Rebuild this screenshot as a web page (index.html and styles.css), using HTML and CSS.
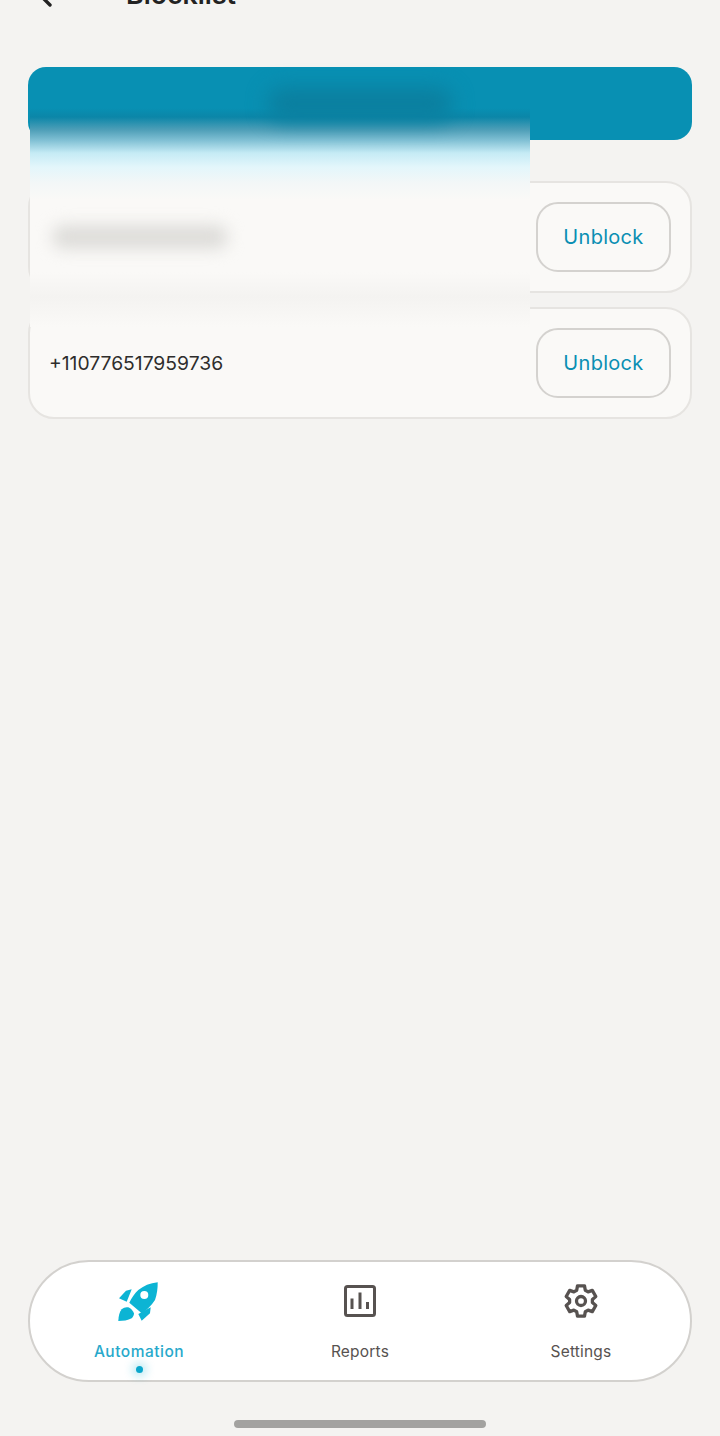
FILE: index.html
```html
<!DOCTYPE html>
<html lang="en">
<head>
    <meta charset="UTF-8">
    <meta name="viewport" content="width=device-width, initial-scale=1.0">
    <title>Blocklist</title>
    <link rel="stylesheet" href="styles.css">
</head>
<body>
    <header class="topbar">
        <svg class="back" width="24" height="28" viewBox="0 0 24 28" fill="none" stroke="#222" stroke-width="3.4" stroke-linecap="round" stroke-linejoin="round">
            <path d="M16 9 L8 17 L16 25"/>
        </svg>
        <h1 class="title">Blocklist</h1>
    </header>

    <main class="content">
        <div class="banner"><span class="banner-blur"></span></div>

        <div class="row">
            <span class="number-blur"></span>
            <button class="btn">Unblock</button>
        </div>
        <div class="row">
            <span class="number">+110776517959736</span>
            <button class="btn">Unblock</button>
        </div>

        <!-- smudge over the top of the list -->
        <div class="smudge"></div>
    </main>

    <nav class="tabs">
        <a class="tab active">
            <svg width="44" height="44" viewBox="0 0 44 44" fill="#0cb4d4">
                <path fill-rule="evenodd" d="M40.700 3.300 C33 4 26.500 7 21.300 11 C17.500 14.500 14.500 19 12.300 23.700 L24.700 34.300 C29.500 31.500 34 27 38 21 C40 15.500 40.800 9.500 40.700 3.300 Z M27.300 12 A4 4 0 1 0 27.300 20 A4 4 0 1 0 27.300 12 Z"/>
                <path d="M14.700 10.300 L9 11.700 L2 19.300 L9.700 22.700 Z"/>
                <path d="M33.700 28.300 L33 34.300 L24.700 41.700 L21.300 35 Z"/>
                <path d="M1.300 42 C1.500 37 2.500 33 4.700 30.300 C6.500 28.500 9 27.800 11.300 28.300 C14 29.500 16 31.800 17 34.300 C17 36.500 16 38 14.700 39.300 C11 41.500 6 42 1.300 42 Z"/>
            </svg>
            <span class="tab-label">Automation</span>
            <span class="dot"></span>
        </a>
        <a class="tab">
            <svg width="44" height="44" viewBox="0 0 44 44" fill="none" stroke="#575250" stroke-width="3">
                <rect x="7.500" y="7.500" width="29" height="29" rx="2"/>
                <path d="M14 19.500 V30 M22 13.500 V30 M29.500 23 V30"/>
            </svg>
            <span class="tab-label">Reports</span>
        </a>
        <a class="tab">
            <svg width="44" height="44" viewBox="0 0 44 44" fill="none" stroke="#575250" stroke-width="3.300" stroke-linejoin="round">
                <path d="M17.700 11.300 L18.500 6.900 H25.500 L26.300 11.300 L29.100 12.900 L33.300 11.400 L36.800 17.500 L33.400 20.400 V23.600 L36.800 26.500 L33.300 32.600 L29.100 31.100 L26.300 32.700 L25.500 37.100 H18.500 L17.700 32.700 L14.900 31.100 L10.700 32.600 L7.200 26.500 L10.600 23.600 V20.400 L7.200 17.500 L10.700 11.400 L14.900 12.900 Z"/>
                <circle cx="22" cy="22" r="4.500"/>
            </svg>
            <span class="tab-label">Settings</span>
        </a>
    </nav>

    <div class="home-bar"></div>
</body>
</html>
```

FILE: styles.css
```css
body {
    display: flex;
    flex-direction: column;
    height: 1436px;
    margin: 0;
    overflow: hidden;
    background-color: #f4f3f1;
    font-family: 'Inter', 'Noto Sans', sans-serif;
    color: #222;
}

.topbar {
    display: flex;
    align-items: center;
    gap: 68px;
    height: 48px;
    margin-top: -30px;
    padding-left: 34px;
    flex-shrink: 0;
}

.title {
    margin: 0;
    font-size: 26.800px;
    font-weight: 600;
}

.content {
    position: relative;
    flex: 1;
    display: flex;
    flex-direction: column;
    padding: 49px 28px 0;
}

.banner {
    display: flex;
    justify-content: center;
    height: 73px;
    margin-bottom: 41px;
    border-radius: 18px;
    background-color: #0890b3;
}

.banner-blur {
    position: relative;
    z-index: 1;
    width: 186px;
    height: 34px;
    margin-top: 20px;
    border-radius: 17px;
    background-color: #0b7f9f;
    filter: blur(10px);
}

.row {
    display: flex;
    align-items: center;
    justify-content: space-between;
    box-sizing: border-box;
    height: 112px;
    margin-bottom: 14px;
    padding: 0 19px;
    border: 2px solid #e6e4e1;
    border-radius: 26px;
    background-color: #faf9f7;
}

.number {
    font-size: 19.300px;
    color: #2e2d2c;
}

.number-blur {
    position: relative;
    z-index: 1;
    width: 176px;
    height: 24px;
    margin-left: 3px;
    border-radius: 12px;
    background-color: #dddcd9;
    filter: blur(8px);
}

.btn {
    width: 135px;
    height: 70px;
    border: 2px solid #d4d2cf;
    border-radius: 22px;
    background-color: transparent;
    font-family: inherit;
    font-size: 20px;
    letter-spacing: 0.3px;
    color: #0a8fb3;
}

.smudge {
    position: absolute;
    top: 55px;
    left: 30px;
    width: 500px;
    height: 254px;
    background: linear-gradient(to bottom,
        rgba(8, 144, 179, 0) 0,
        rgba(8, 144, 179, 0) 35px,
        #0b86a8 44px,
        #4f9fb8 57px,
        #7fbfd3 67px,
        #c5ebf5 80px,
        #e3f6fb 94px,
        #f3f7f7 110px,
        #faf9f7 127px,
        #faf9f7 199px,
        #f4f3f1 224px,
        #faf9f7 254px);
}

.tabs {
    display: flex;
    justify-content: center;
    box-sizing: border-box;
    height: 122px;
    margin: 0 28px 38px;
    border: 2px solid #d3d1ce;
    border-radius: 61px;
    background-color: #fff;
    flex-shrink: 0;
}

.tab {
    position: relative;
    flex: 0 0 221px;
    display: flex;
    flex-direction: column;
    align-items: center;
    padding-top: 17px;
    color: #575250;
}

.tab-label {
    margin-top: 19px;
    font-size: 15.500px;
    letter-spacing: 0.2px;
}

.tab.active .tab-label {
    font-weight: 500;
    letter-spacing: 0.5px;
    color: #28a9cb;
}

.dot {
    position: absolute;
    bottom: 7px;
    width: 7px;
    height: 7px;
    border-radius: 50%;
    background-color: #0aa7cc;
    box-shadow: 0 0 8px 4px rgba(12, 180, 212, 0.25);
}

.home-bar {
    flex-shrink: 0;
    width: 252px;
    height: 8px;
    margin: 0 auto 8px;
    border-radius: 4px;
    background-color: #a3a2a0;
}
```
